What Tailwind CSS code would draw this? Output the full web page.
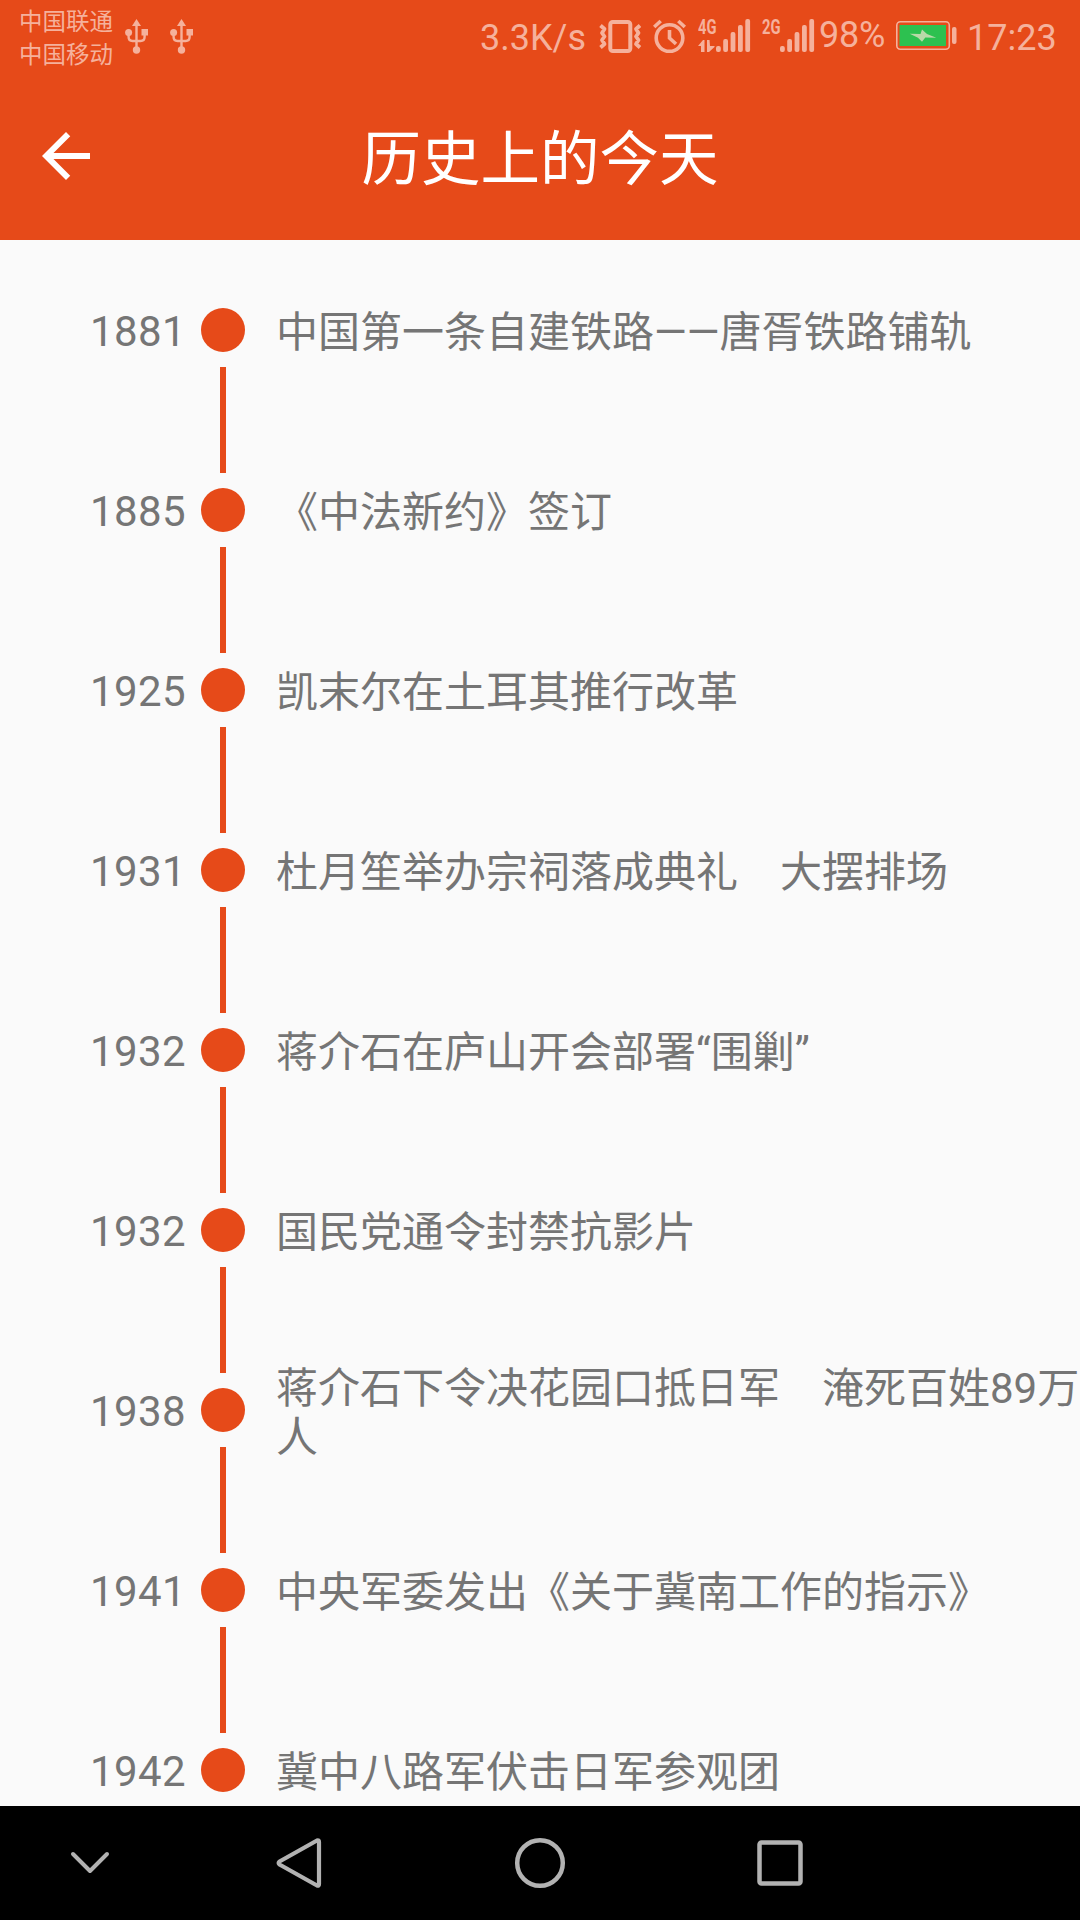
<!DOCTYPE html>
<html lang="zh-CN">
<head>
<meta charset="utf-8">
<title>历史上的今天</title>
<script src="https://cdn.jsdelivr.net/npm/@tailwindcss/browser@4"></script>
</head>
<body class="flex h-[1920px] w-[1080px] flex-col overflow-hidden bg-[#fafafa] font-['Roboto','Noto_Sans_CJK_SC',sans-serif]">
<header class="h-[240px] shrink-0 bg-[#e64a19]">
  <!-- status bar -->
  <div class="flex h-[72px] items-start text-[36px] leading-[42px] text-[#f5b19c]">
    <div class="ml-[19px] mt-[6px] w-[106px] shrink-0 text-[23.5px] leading-[33px] whitespace-nowrap"><div>中国联通</div><div>中国移动</div></div>
    <svg class="mt-[19px] shrink-0" width="24" height="35" viewBox="0 0 24 35" fill="currentColor"><path d="M11.500 0 16 7H7z"/><circle cx="11.500" cy="31" r="3.700"/><circle cx="3.600" cy="13.500" r="3.500"/><path d="M16.500 10h6.500v6.500h-6.500z"/><path d="M11.500 5v24M3.600 14v4q0 4 4 4h8q4 0 4-4v-4" fill="none" stroke="currentColor" stroke-width="2.400"/></svg>
    <svg class="ml-[21px] mt-[19px] shrink-0" width="24" height="35" viewBox="0 0 24 35" fill="currentColor"><path d="M11.500 0 16 7H7z"/><circle cx="11.500" cy="31" r="3.700"/><circle cx="3.600" cy="13.500" r="3.500"/><path d="M16.500 10h6.500v6.500h-6.500z"/><path d="M11.500 5v24M3.600 14v4q0 4 4 4h8q4 0 4-4v-4" fill="none" stroke="currentColor" stroke-width="2.400"/></svg>
    <span class="ml-auto mt-[17px] w-[119px] shrink-0">3.3K/s</span>
    <svg class="mt-[19px] shrink-0" width="44" height="35" viewBox="0 0 44 35" fill="none" stroke="currentColor"><rect x="11.300" y="3" width="20" height="29" rx="2.500" stroke-width="4"/><path stroke-width="3.800" stroke-linejoin="round" d="m1.500 6.500 4 3.500-2.500 4L5.500 17.500 3 21l2.500 4-4 3.500M41 6.500l-4 3.500 2.500 4-2.500 3.500 2.500 3.500-2.500 4 4 3.500"/></svg>
    <svg class="ml-[10px] mt-[19px] shrink-0" width="34" height="35" viewBox="0 0 34 35" fill="none" stroke="currentColor" stroke-width="3.600"><circle cx="16.500" cy="19" r="13.300"/><path d="M16.500 11v8l6.500 6M1.200 8l6.500-6M31.800 8l-6.500-6"/></svg>
    <svg class="ml-[11px] mt-[14px] shrink-0" width="53" height="39" viewBox="0 -4 53 39" fill="currentColor"><text x="0" y="16" font-size="21" font-weight="700" textLength="18.500" lengthAdjust="spacingAndGlyphs">4G</text><path d="M0 28l5-6h1.500v12H3v-6zM9 22h2.500l.5 6h4.500v1L11 34H9z"/><rect x="18" y="28" width="4.800" height="6" rx="2"/><rect x="25.200" y="21" width="4.800" height="13" rx="2"/><rect x="32.600" y="14" width="4.800" height="20" rx="2"/><rect x="40" y="7" width="4.800" height="27" rx="2"/><rect x="47.300" y="1" width="4.800" height="33" rx="2"/></svg>
    <svg class="ml-[11px] mt-[14px] shrink-0" width="53" height="39" viewBox="0 -4 53 39" fill="currentColor"><text x="0" y="16" font-size="21" font-weight="700" textLength="18.500" lengthAdjust="spacingAndGlyphs">2G</text><rect x="18" y="28" width="4.800" height="6" rx="2"/><rect x="25.200" y="21" width="4.800" height="13" rx="2"/><rect x="32.600" y="14" width="4.800" height="20" rx="2"/><rect x="40" y="7" width="4.800" height="27" rx="2"/><rect x="47.300" y="1" width="4.800" height="33" rx="2"/></svg>
    <span class="ml-[4px] mt-[14px] w-[77px] shrink-0 tracking-[-0.2px]">98%</span>
    <svg class="mt-[21px] shrink-0" width="62" height="30" viewBox="0 0 62 30"><rect x=".8" y=".8" width="52.500" height="27.500" rx="3.500" fill="none" stroke="currentColor" stroke-width="1.600"/><rect x="3.500" y="4" width="46.500" height="21" fill="#2dc150"/><rect x="56" y="6" width="4.500" height="17" rx="2" fill="currentColor"/><path d="M13.700 12.700 24.500 13 26 8.500 31 13l9.300 3.700-11-.2L26 20.700l-4-4z" fill="#b9d9a8"/></svg>
    <span class="ml-[8px] mr-[23px] mt-[17px] w-[91px] shrink-0 pl-[1px]">17:23</span>
  </div>
  <!-- title bar -->
  <div class="grid h-[168px] grid-cols-[1fr_auto_1fr] items-center text-white">
    <svg class="ml-[30px]" width="72" height="72" viewBox="0 0 24 24" fill="currentColor"><path d="M20 11H7.830l5.590-5.590L12 4l-8 8 8 8 1.410-1.410L7.830 13H20v-2z"/></svg>
    <h1 class="pt-[8px] text-[59.5px] leading-[88px]">历史上的今天</h1>
  </div>
</header>
<main class="flex h-[1566px] shrink-0 flex-col overflow-hidden text-[42px] leading-[49px] text-[#757575]" id="timeline"></main>
<nav class="grid h-[114px] shrink-0 grid-cols-[180px_240px_240px_240px] items-center justify-items-center bg-black text-[#b2b2b2]">
  <svg width="50" height="54" viewBox="0 0 50 54" fill="none" stroke="currentColor" stroke-width="4" stroke-linecap="round" stroke-linejoin="round"><path d="m8 18 17 17 17-17"/></svg>
  <svg width="54" height="54" viewBox="0 0 54 54" fill="none" stroke="currentColor" stroke-width="4.200" stroke-linejoin="round"><path d="M44 4.500q2-.8 2 1.500v42q0 2.300-2 1.500L6.500 28.500q-1.500-1.500 0-3z"/></svg>
  <svg width="54" height="54" viewBox="0 0 54 54" fill="none" stroke="currentColor" stroke-width="4.500"><circle cx="27" cy="27" r="22.800"/></svg>
  <svg width="54" height="54" viewBox="0 0 54 54" fill="none" stroke="currentColor" stroke-width="4.500"><rect x="6.500" y="6.500" width="41" height="41" rx="2"/></svg>
</nav>
<script>
const events = [
  ['1881', '中国第一条自建铁路——唐胥铁路铺轨'],
  ['1885', '《中法新约》签订'],
  ['1925', '凯末尔在土耳其推行改革'],
  ['1931', '杜月笙举办宗祠落成典礼　大摆排场'],
  ['1932', '蒋介石在庐山开会部署“围剿”'],
  ['1932', '国民党通令封禁抗影片'],
  ['1938', '蒋介石下令决花园口抵日军　淹死百姓89万人'],
  ['1941', '中央军委发出《关于冀南工作的指示》'],
  ['1942', '冀中八路军伏击日军参观团']
];
document.getElementById('timeline').innerHTML = events.map(([year, text], i) => `
  <div class="flex h-[180px] shrink-0 items-center">
    <div class="w-[201px] shrink-0 pl-[90px] pt-[3px] tracking-[0.4px]">${year}</div>
    <div class="flex h-[180px] w-[44px] shrink-0 flex-col items-center justify-between">
      <div class="h-[53px] w-[6px] ${i ? 'bg-[#e64a19]' : ''}"></div>
      <div class="size-[44px] rounded-full bg-[#e64a19]"></div>
      <div class="h-[53px] w-[6px] bg-[#e64a19]"></div>
    </div>
    <div class="ml-[31px] w-[804px] shrink-0 pt-[5px] [text-spacing-trim:space-all]">${text}</div>
  </div>`).join('');
</script>
</body>
</html>
